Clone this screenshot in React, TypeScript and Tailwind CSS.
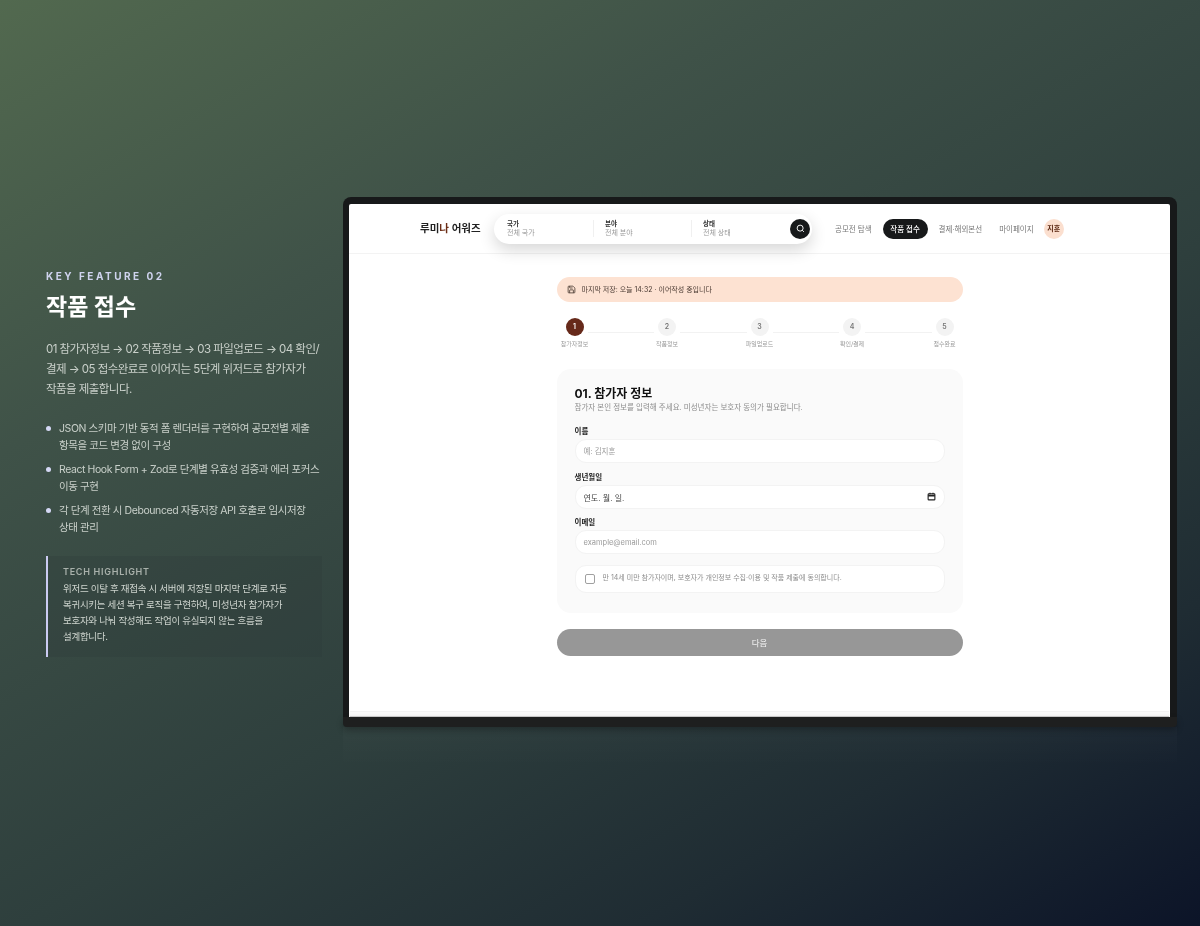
import React from "react";

const font = { fontFamily: '"Inter","Noto Sans CJK KR","Noto Sans",sans-serif' };

const Field = ({ label, value, dark, calendar }: { label: string; value: string; dark?: boolean; calendar?: boolean }) => (
  <div className="flex flex-col">
    <div className="text-[7.5px] leading-[10px] font-semibold text-[#222]">{label}</div>
    <div className={`mt-[2px] h-[24px] rounded-[11px] bg-white border border-[#f3f3f3] pl-[8px] pr-[8px] flex items-center justify-between ${dark ? "text-[8px] text-[#444]" : "text-[7.5px] text-[#9a9a9a]"}`}>
      <span className="pt-[2px]">{value}</span>
      {calendar && (
        <svg width="9" height="9" viewBox="0 0 24 24" fill="none" stroke="#222" strokeWidth="3">
          <rect x="3" y="5" width="18" height="16" rx="2" />
          <path d="M3 10h18" strokeWidth="4" />
          <path d="M8 2v4M16 2v4" />
        </svg>
      )}
    </div>
  </div>
);

const steps = ["참가자정보", "작품정보", "파일업로드", "확인/결제", "접수완료"];

export default function App() {
  return (
    <div
      style={font}
      className="relative w-[1200px] h-[926px] overflow-hidden flex items-center pl-[46px] gap-[17px] blur-[0.4px] bg-[linear-gradient(150deg,#52694f_0%,#3f5248_28%,#2e3f3d_58%,#1f2c33_80%,#0c1428_100%)]"
    >
      <aside className="w-[280px] shrink-0 flex flex-col text-[#c9d0ca]">
        <div className="text-[10px] leading-[14px] font-bold tracking-[0.25em] text-[#cfd3ee]">KEY FEATURE 02</div>
        <h1 className="mt-[9px] text-[23px] leading-[30px] font-bold text-white">작품 접수</h1>
        <p className="mt-[17px] text-[11.5px] leading-[20px] tracking-[-0.55px] whitespace-nowrap">
          01 참가자정보 → 02 작품정보 → 03 파일업로드 → 04 확인/
          <br />
          결제 → 05 접수완료로 이어지는 5단계 위저드로 참가자가
          <br />
          작품을 제출합니다.
        </p>
        <ul className="mt-[21px] flex flex-col gap-[7px] text-[10.5px] leading-[17px] tracking-[-0.42px]">
          {[
            ["JSON 스키마 기반 동적 폼 렌더러를 구현하여 공모전별 제출", "항목을 코드 변경 없이 구성"],
            ["React Hook Form + Zod로 단계별 유효성 검증과 에러 포커스", "이동 구현"],
            ["각 단계 전환 시 Debounced 자동저장 API 호출로 임시저장", "상태 관리"],
          ].map(([a, b]) => (
            <li key={a} className="flex">
              <span className="mt-[6px] w-[5px] h-[5px] rounded-full bg-[#d5d8f5] shrink-0" />
              <span className="ml-[8px] whitespace-nowrap">
                {a}
                <br />
                {b}
              </span>
            </li>
          ))}
        </ul>
        <div className="mt-[20px] w-[276px] h-[101px] border-l-2 border-[#cbcbf2] bg-[#2a3936]/25 pl-[15px] pt-[9px]">
          <div className="text-[9px] leading-[14px] font-semibold tracking-[0.08em] text-[#a9b1ab]">TECH HIGHLIGHT</div>
          <p className="mt-[2px] text-[9.5px] leading-[16px] tracking-[-0.3px] text-[#cfd5cf] whitespace-nowrap">
            위저드 이탈 후 재접속 시 서버에 저장된 마지막 단계로 자동
            <br />
            복귀시키는 세션 복구 로직을 구현하여, 미성년자 참가자가
            <br />
            보호자와 나눠 작성해도 작업이 유실되지 않는 흐름을
            <br />
            설계합니다.
          </p>
        </div>
      </aside>

      <section className="relative w-[834px] shrink-0 flex flex-col -mt-[2px]">
        <div className="rounded-t-[8px] bg-[#17191a] pt-[7px] pl-[6px] pr-[7px]">
          <div className="h-[513px] bg-white rounded-t-[2px] flex flex-col text-[#333]">
            <header className="h-[50px] shrink-0 border-b border-[#f3f3f3] flex items-center pl-[71px]">
              <div className="w-[74px] text-[10.5px] font-semibold text-[#222] whitespace-nowrap">
                루미<span className="text-[#6b2d16]">나</span> 어워즈
              </div>
              <div className="w-[318px] h-[30px] rounded-full bg-white shadow-[0_6px_16px_rgba(0,0,0,0.16)] flex items-center pl-[13px] pr-[2px]">
                {[
                  ["국가", "전체 국가"],
                  ["분야", "전체 분야"],
                ].map(([a, b]) => (
                  <div key={a} className="w-[87px] mr-[11px] shrink-0 flex flex-col border-r border-[#f0f0f0]">
                    <span className="text-[6.5px] leading-[8px] font-semibold text-[#333]">{a}</span>
                    <span className="text-[7px] leading-[9px] text-[#999]">{b}</span>
                  </div>
                ))}
                <div className="flex flex-col">
                  <span className="text-[6.5px] leading-[8px] font-semibold text-[#333]">상태</span>
                  <span className="text-[7px] leading-[9px] text-[#999]">전체 상태</span>
                </div>
                <div className="ml-auto w-[20px] h-[20px] rounded-full bg-[#17191a] flex items-center justify-center">
                  <svg width="9" height="9" viewBox="0 0 24 24" fill="none" stroke="#fff" strokeWidth="2.5">
                    <circle cx="11" cy="11" r="8" />
                    <path d="m21 21-4.3-4.3" />
                  </svg>
                </div>
              </div>
              <nav className="ml-[23px] flex items-center text-[7.5px] text-[#777] whitespace-nowrap">
                <span className="pt-[2px]">공모전 탐색</span>
                <span className="ml-[11px] w-[45px] h-[20px] pt-[2px] rounded-full bg-[#17191a] text-white font-medium flex items-center justify-center">작품 접수</span>
                <span className="ml-[11px] pt-[2px]">결제·해외본선</span>
                <span className="ml-[17px] pt-[2px]">마이페이지</span>
                <span className="ml-[10px] w-[20px] h-[20px] pt-[2px] rounded-full bg-[#fbdfcf] text-[#5e2a14] text-[7px] font-semibold flex items-center justify-center">지훈</span>
              </nav>
            </header>

            <main className="flex-1 w-[406px] mx-auto pt-[23px] flex flex-col">
              <div className="h-[25px] rounded-full bg-[#fde2d2] flex items-center pl-[10px] text-[7px] text-[#4a3a32]">
                <svg width="9" height="9" viewBox="0 0 24 24" fill="none" stroke="#4a3a32" strokeWidth="2.2">
                  <path d="M15.2 3a2 2 0 0 1 1.4.6l3.8 3.8a2 2 0 0 1 .6 1.4V19a2 2 0 0 1-2 2H5a2 2 0 0 1-2-2V5a2 2 0 0 1 2-2z" />
                  <path d="M17 21v-7a1 1 0 0 0-1-1H8a1 1 0 0 0-1 1v7" />
                  <path d="M7 3v4a1 1 0 0 0 1 1h7" />
                </svg>
                <span className="ml-[6px] pt-[2px]">마지막 저장: 오늘 14:32 · 이어작성 중입니다</span>
              </div>

              <div className="mt-[16px] flex items-start justify-between px-[9px]">
                {steps.map((s, i) => (
                  <React.Fragment key={s}>
                    <div className="relative w-[18px] flex flex-col items-center">
                      <div className={`w-[18px] h-[18px] rounded-full flex items-center justify-center text-[7px] font-semibold ${i === 0 ? "bg-[#66291a] text-white" : "bg-[#f3f3f3] text-[#777]"}`}>
                        {i + 1}
                      </div>
                      <div className="mt-[4px] text-[6px] leading-[8px] text-[#999] whitespace-nowrap">{s}</div>
                    </div>
                    {i < 4 && <div className="flex-1 mx-[4px] mt-[14px] h-px bg-[#f2f2f2]" />}
                  </React.Fragment>
                ))}
              </div>

              <div className="mt-[21px] h-[244px] rounded-[14px] bg-[#fafafa] px-[18px] pt-[17px]">
                <h2 className="text-[12px] leading-[16px] font-bold text-[#111]">01. 참가자 정보</h2>
                <p className="text-[7.5px] leading-[12px] text-[#8d8d8d]">참가자 본인 정보를 입력해 주세요. 미성년자는 보호자 동의가 필요합니다.</p>
                <div className="mt-[13px] flex flex-col gap-[9.5px]">
                  <Field label="이름" value="예: 김지훈" />
                  <Field label="생년월일" value="연도. 월. 일." dark calendar />
                  <Field label="이메일" value="example@email.com" />
                  <div className="mt-[1.5px] h-[28px] rounded-[11px] bg-white border border-[#f3f3f3] pl-[9px] flex items-center text-[7px] text-[#8d8d8d]">
                    <span className="w-[10px] h-[10px] rounded-[2px] border border-[#a0a0a0] bg-white shrink-0" />
                    <span className="ml-[8px] -mt-[2px]">만 14세 미만 참가자이며, 보호자가 개인정보 수집·이용 및 작품 제출에 동의합니다.</span>
                  </div>
                </div>
              </div>

              <div className="mt-[16px] h-[27px] pt-[2px] rounded-full bg-[#979797] text-white/90 text-[8.5px] flex items-center justify-center">다음</div>
            </main>

            <div className="h-[6px] shrink-0 mx-[1px] bg-[#fafafa] border-t border-[#f3f3f3] border-b-[#cfcfcf] border-b" />
          </div>
        </div>
        <div className="h-[10px] bg-[#1e1f1f] rounded-b-[4px] shadow-[0_3px_6px_rgba(0,0,0,0.3)]" />
        <div className="absolute left-0 right-0 top-full h-[40px] bg-[linear-gradient(180deg,rgba(255,255,255,0.02),rgba(255,255,255,0))]" />
      </section>
    </div>
  );
}
